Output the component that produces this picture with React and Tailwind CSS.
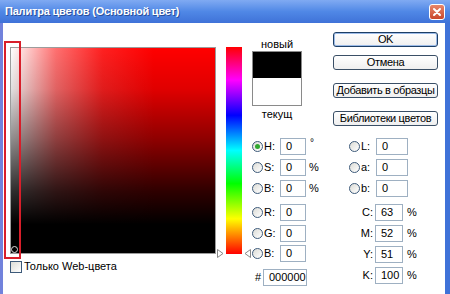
import React from "react";

function Radio({ checked }) {
  return (
    <div className="relative w-[11px] h-[11px] rounded-full border border-[#3d5a7a] bg-linear-to-br from-[#dcdcd6] to-white shrink-0 flex items-center justify-center">
      {checked && <div className="w-[5px] h-[5px] rounded-full bg-[#2fa82f]" />}
    </div>
  );
}

function Input({ value, w }) {
  return (
    <div
      className={`h-[17px] border border-[#9eb0c2] bg-white flex items-center pl-[5px] text-[11px] leading-none text-black shrink-0 ${w}`}
    >
      {value}
    </div>
  );
}

function LeftRow({ label, value, unit, checked, mt }) {
  return (
    <div className={`flex items-center h-[17px] ${mt}`}>
      <Radio checked={checked} />
      <span className="w-[17px] pl-[1px]">{label}</span>
      <Input value={value} w="w-[26px]" />
      {unit === "deg" ? (
        <span className="ml-[4px] self-start text-[10px] leading-[10px] text-black">°</span>
      ) : unit ? (
        <span className="ml-[3px]">{unit}</span>
      ) : null}
    </div>
  );
}

function LabRow({ label, value, mt }) {
  return (
    <div className={`flex items-center h-[17px] ${mt}`}>
      <Radio />
      <span className="w-[16px] pl-[1px]">{label}</span>
      <Input value={value} w="w-[32px]" />
    </div>
  );
}

function CmykRow({ label, value, mt }) {
  return (
    <div className={`flex items-center h-[17px] ${mt}`}>
      <span className="w-[24px] text-right">{label}</span>
      <Input value={value} w="w-[28px] ml-[2px]" />
      <span className="ml-[4px]">%</span>
    </div>
  );
}

function Btn({ children, def, mt }) {
  return (
    <div
      className={`h-[15px] w-[105px] rounded-[3px] border ${
        def ? "border-[#1d3f66] shadow-[inset_0_0_0_1px_#9cbbe8]" : "border-[#3a4f66]"
      } bg-linear-to-b from-white to-[#efefef] flex items-center justify-center text-[11px] tracking-[-0.35px] leading-none text-black whitespace-nowrap ${mt}`}
    >
      {children}
    </div>
  );
}

export default function App() {
  return (
    <div className="w-[450px] h-[294px] overflow-hidden flex flex-col font-['Liberation_Sans',Arial,sans-serif] text-[11px] leading-[13px] text-black bg-white">
      {/* Title bar */}
      <div className="h-[23px] shrink-0 flex items-center justify-between pl-[5px] pr-[5px] bg-linear-to-b from-[#80aaf2] via-[#5088e6] to-[#3f72d8]">
        <span className="text-white font-bold text-[11px] tracking-[-0.2px] [text-shadow:1px_1px_0_#2a4f9a]">
          Палитра цветов (Основной цвет)
        </span>
        <div className="w-[16px] h-[16px] rounded-[3px] border border-white bg-linear-to-b from-[#e8866a] to-[#c9462a] flex items-center justify-center">
          <svg width="10" height="10" viewBox="0 0 10 10">
            <path d="M2 2 L8 8 M8 2 L2 8" stroke="white" strokeWidth="2" strokeLinecap="round" />
          </svg>
        </div>
      </div>

      {/* Body */}
      <div className="flex-1 flex bg-white border-l-[3px] border-l-[#7182dc] border-r-[5px] border-r-[#3f72d8]">
        {/* Color field column */}
        <div className="pl-[7px] pt-[24px] flex flex-col">
          <div className="relative w-[206px] h-[207px] border border-[#9c9c9c]">
            <div className="w-full h-full bg-[linear-gradient(to_right,#ffffff_0%,#ff7070_22%,#ff2020_45%,#ff0000_70%,#ff0000_100%)]">
              <div className="w-full h-full bg-[linear-gradient(to_top,#000000_0%,#000000_14%,rgba(0,0,0,0.82)_30%,rgba(0,0,0,0.45)_55%,rgba(0,0,0,0.12)_80%,rgba(0,0,0,0)_100%)]" />
            </div>
            {/* picker circle */}
            <div className="absolute left-[0px] bottom-[0px] w-[7px] h-[7px] rounded-full border border-[#dddddd]" />
            {/* red annotation */}
            <div className="absolute left-[-7px] top-[-7px] w-[17px] h-[218px] border-2 border-[#d81e2a]" />
          </div>
          <div className="flex items-center mt-[6px]">
            <div className="w-[12px] h-[12px] border border-[#3d5a7a] bg-linear-to-br from-[#dcdcd6] to-white" />
            <span className="ml-[2px]">Только Web-цвета</span>
          </div>
        </div>

        {/* Hue slider */}
        <div className="ml-[10px] pt-[24px]">
          <div className="relative w-[16px] h-[207px] bg-[linear-gradient(to_bottom,#ff0000_0%,#ff00ff_16%,#0000ff_33%,#00ffff_50%,#00ff00_66%,#ffff00_83%,#ff0000_100%)]">
            <svg className="absolute left-[-9px] bottom-[-4px]" width="7" height="9" viewBox="0 0 7 9">
              <polygon points="0.5,0.5 6,4.5 0.5,8.5" fill="white" stroke="#888" strokeWidth="1" />
            </svg>
            <svg className="absolute left-[18px] bottom-[-4px]" width="7" height="9" viewBox="0 0 7 9">
              <polygon points="6.5,0.5 1,4.5 6.5,8.5" fill="white" stroke="#888" strokeWidth="1" />
            </svg>
          </div>
        </div>

        {/* Right area */}
        <div className="ml-[10px] pt-[9px] flex flex-col">
          <div className="flex">
            <div className="w-[50px] flex flex-col items-center pt-[6px]">
              <span className="leading-[13px]">новый</span>
              <div className="w-[50px] h-[55px] border border-[#8a8a8a] flex flex-col">
                <div className="h-[26px] bg-black" />
                <div className="flex-1 bg-white" />
              </div>
              <span className="mt-[2px] leading-[13px]">текущ</span>
            </div>
            <div className="ml-[31px] flex flex-col">
              <Btn def>OK</Btn>
              <Btn mt="mt-[8px]">Отмена</Btn>
              <Btn mt="mt-[13px]">Добавить в образцы</Btn>
              <Btn mt="mt-[13px]">Библиотеки цветов</Btn>
            </div>
          </div>

          <div className="flex mt-[12px]">
            <div className="w-[97px] flex flex-col">
              <LeftRow label="H:" value="0" unit="deg" checked />
              <LeftRow label="S:" value="0" unit="%" mt="mt-[4px]" />
              <LeftRow label="B:" value="0" unit="%" mt="mt-[4px]" />
              <LeftRow label="R:" value="0" mt="mt-[7px]" />
              <LeftRow label="G:" value="0" mt="mt-[4px]" />
              <LeftRow label="B:" value="0" mt="mt-[3px]" />
              <div className="flex items-center h-[17px] mt-[7px] pl-[3px]">
                <span className="w-[8px]">#</span>
                <Input value="000000" w="w-[44px]" />
              </div>
            </div>
            <div className="flex flex-col">
              <LabRow label="L:" value="0" />
              <LabRow label="a:" value="0" mt="mt-[4px]" />
              <LabRow label="b:" value="0" mt="mt-[4px]" />
              <CmykRow label="C:" value="63" mt="mt-[7px]" />
              <CmykRow label="M:" value="52" mt="mt-[4px]" />
              <CmykRow label="Y:" value="51" mt="mt-[4px]" />
              <CmykRow label="K:" value="100" mt="mt-[4px]" />
            </div>
          </div>
        </div>
      </div>
    </div>
  );
}
